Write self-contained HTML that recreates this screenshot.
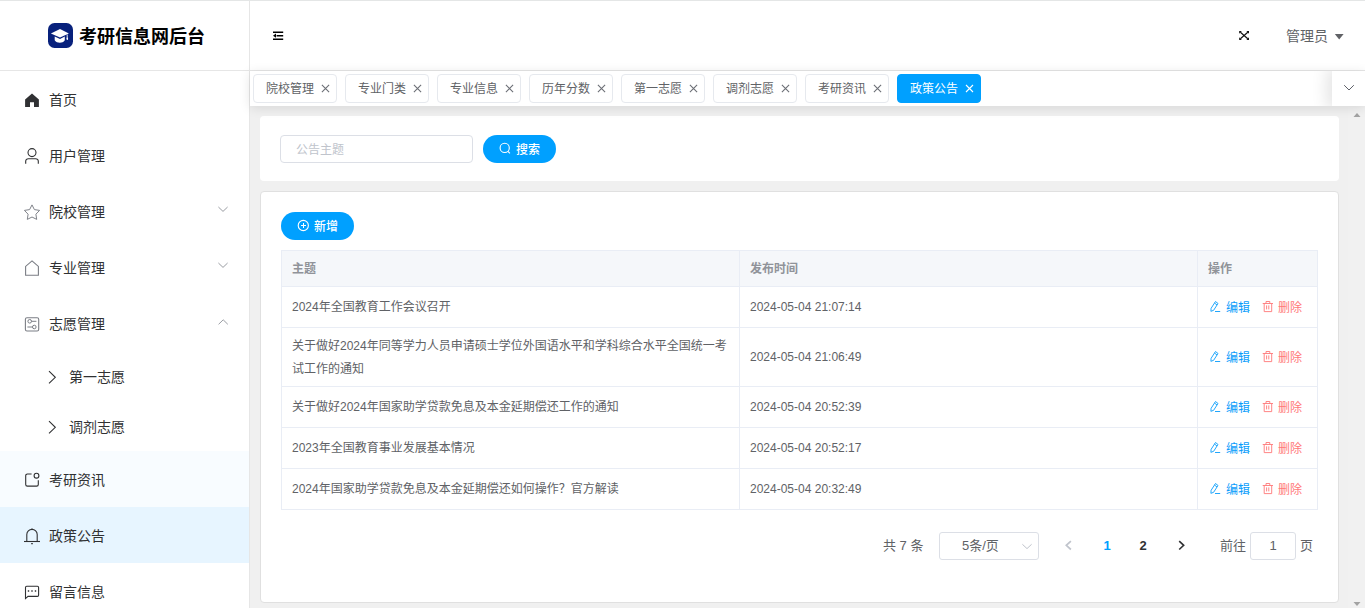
<!DOCTYPE html>
<html lang="zh-CN">
<head>
<meta charset="utf-8">
<title>考研信息网后台</title>
<style>
*{box-sizing:border-box;margin:0;padding:0}
html,body{width:1365px;height:608px;overflow:hidden;background:#fff}
body{position:relative;font-family:"Liberation Sans","Noto Sans CJK SC",sans-serif;font-size:14px;color:#303133;-webkit-font-smoothing:antialiased}
.abs{position:absolute}
svg{position:absolute;overflow:visible}
.topline{left:0;top:0;width:1365px;height:1px;background:#e4e6e6;z-index:50}

/* sidebar */
.side{left:0;top:0;width:250px;height:608px;background:#fff;border-right:1px solid #e6e6e6;overflow:hidden}
.logo{left:0;top:0;width:249px;height:71px;border-bottom:1px solid #e6e6e6}
.logo .ico{left:47.5px;top:23.3px;width:25.3px;height:25.2px;border-radius:6.5px;background:#08217c}
.logo .tt{left:79px;top:21.5px;height:30px;line-height:30px;font-size:18px;font-weight:700;color:#000;white-space:nowrap;letter-spacing:0}
.mi{left:0;width:249px;height:56px;line-height:56px;font-size:14px;color:#303133;white-space:nowrap}
.mi span{position:absolute;left:49px;top:1px}
.mi.sub{height:50px;line-height:50px}
.mi.sub span{left:69px}
.mi.hov{background:#f8fcff}
.mi.act{background:#e7f5ff}

/* header */
.hdr{left:250px;top:0;width:1115px;height:71px;background:#fff;border-bottom:1px solid #e6e6e6}
.user{left:1036px;top:21px;height:30px;line-height:30px;font-size:14px;color:#606266;white-space:nowrap}

/* tabs */
.tabs{left:250px;top:71px;width:1115px;height:35px;background:#fff;box-shadow:0 2px 12px 0 rgba(0,0,0,.11);z-index:5}
.tab{top:3px;height:29px;width:84px;border:1px solid #e6e9ee;border-radius:4px;background:#fff;font-size:12px;line-height:27px;color:#606266;white-space:nowrap}
.tab span{position:absolute;left:12px;top:1px}
.tab.on{background:#00a0ff;border-color:#00a0ff;color:#fff}
.tabmore{left:1082px;top:0;width:33px;height:35px;background:#fff;box-shadow:-3px 0 15px 3px rgba(0,0,0,.1)}
.tabclip{left:0;top:0;width:1115px;height:35px;overflow:hidden}

/* main */
.main{left:250px;top:106px;width:1098px;height:502px;background:#f0f0f0}
.sbar{left:1348px;top:106px;width:17px;height:502px;background:#f1f1f1}
.card1{left:10px;top:10px;width:1079px;height:65px;background:#fff;border-radius:4px}
.card2{left:10px;top:85px;width:1079px;height:412px;background:#fff;border:1px solid #e0e0e0;border-radius:4px}
.inp{left:20px;top:19px;width:193px;height:28px;border:1px solid #dcdfe6;border-radius:4px;font-size:12px;line-height:28px;color:#c0c4cc;padding-left:15px}
.btn{height:28px;width:73px;border-radius:14px;background:#00a0ff;color:#fff;font-size:12px;line-height:28px;white-space:nowrap}
.btn span{position:absolute;top:0.5px;font-weight:500}

/* table */
.tbl{left:20px;top:58px;width:1037px;height:260px;border:1px solid #e9edf5;font-size:12px;color:#606266}
.tr{left:0;width:1035px;border-bottom:1px solid #e9edf5}
.th{background:#f5f7fa;color:#909399;font-weight:700}
.td{top:0;height:100%;border-right:1px solid #e9edf5}
.td.c1{left:0;width:458px}
.td.c2{left:458px;width:458px}
.td.c3{left:916px;width:119px;border-right:0}
.td p{position:absolute;left:10px;right:10px;line-height:23px;white-space:nowrap}
.td p.wrap{white-space:normal}
.ed{color:#0a9dfb}
.del{color:#ff7878}
.op{position:absolute;top:0;line-height:23px;white-space:nowrap}

/* pagination */
.pg{font-size:13px;color:#606266;white-space:nowrap;line-height:28px;height:28px}
.pgsel{left:678px;top:340px;width:100px;height:28px;border:1px solid #dcdfe6;border-radius:3px}
.pgin{left:989px;top:340px;width:46px;height:28px;border:1px solid #dcdfe6;border-radius:3px;text-align:center;line-height:26px}
</style>
</head>
<body>
<div class="abs topline"></div>

<!-- SIDEBAR -->
<div class="abs side" id="side">
  <div class="abs logo">
    <div class="abs ico"></div>
    <div class="abs tt">考研信息网后台</div>
    <svg style="left:47px;top:23px" width="26" height="26" viewBox="0 0 26 26">
      <path d="M13 5.9 L21.9 10.4 L13 14.6 L3.9 10.4 Z" fill="#fff"/>
      <path d="M7.7 13.4 L13 15.9 L17.8 13.6 V17.2 C16.6 19 14.8 19.7 12.8 19.7 C10.8 19.7 9 19 7.7 17.2 Z" fill="#fff"/>
      <path d="M20.2 11.6 V15.6" stroke="#fff" stroke-width="0.9" fill="none"/>
      <ellipse cx="20.3" cy="15.8" rx="0.8" ry="1.2" fill="#fff"/>
    </svg>
  </div>

  <div class="abs mi" style="top:71px"><span>首页</span></div>
  <div class="abs mi" style="top:127px"><span>用户管理</span></div>
  <div class="abs mi" style="top:183px"><span>院校管理</span></div>
  <div class="abs mi" style="top:239px"><span>专业管理</span></div>
  <div class="abs mi" style="top:295px"><span>志愿管理</span></div>
  <div class="abs mi sub" style="top:351px"><span>第一志愿</span></div>
  <div class="abs mi sub" style="top:401px"><span>调剂志愿</span></div>
  <div class="abs mi hov" style="top:451px"><span>考研资讯</span></div>
  <div class="abs mi act" style="top:507px"><span>政策公告</span></div>
  <div class="abs mi" style="top:563px"><span>留言信息</span></div>

  <!-- menu icons (page coordinates) -->
  <svg style="left:0;top:0" width="249" height="608" viewBox="0 0 249 608" fill="none" stroke="#303133" stroke-width="1.1">
    <!-- home filled -->
    <path d="M32 93.6 L38.9 99.6 V106.9 H34 V102.2 H30 V106.9 H25.1 V99.6 Z" fill="#303133" stroke="none"/>
    <!-- user -->
    <circle cx="32" cy="152.6" r="4"/>
    <path d="M25.7 163.8 V161.3 A2.6 2.6 0 0 1 28.3 158.7 H35.7 A2.6 2.6 0 0 1 38.3 161.3 V163.8"/>
    <!-- star -->
    <path d="M32.0 204.9 L34.4 209.6 L39.6 210.4 L35.9 214.2 L36.7 219.4 L32.0 217.0 L27.3 219.4 L28.1 214.2 L24.4 210.4 L29.6 209.6 Z" stroke="#80838a" stroke-width="1" stroke-linejoin="round"/>
    <!-- house -->
    <path d="M32 260.9 L38.4 266.4 V275.2 H25.6 V266.4 Z" stroke="#7b7e85"/>
    <!-- set-up -->
    <rect x="25.4" y="317.7" width="13.3" height="13.3" rx="1.6" stroke="#7b7e85"/>
    <circle cx="29.7" cy="321.3" r="1.8" stroke="#7b7e85" stroke-width="1"/>
    <path d="M31.4 321.3 H36.4" stroke="#7b7e85" stroke-width="1"/>
    <circle cx="34.3" cy="327" r="1.8" stroke="#7b7e85" stroke-width="1"/>
    <path d="M27.4 327 H32.6" stroke="#7b7e85" stroke-width="1"/>
    <!-- sub arrows -->
    <path d="M49 371.2 L55.3 377.3 L49 383.4"/>
    <path d="M49 421.2 L55.3 427.3 L49 433.4"/>
    <!-- news -->
    <path d="M31.6 474 H27.4 A1.7 1.7 0 0 0 25.7 475.7 V484.4 A1.7 1.7 0 0 0 27.4 486.1 H36.6 A1.7 1.7 0 0 0 38.3 484.4 V480.2"/>
    <circle cx="36.5" cy="475.7" r="2.4"/>
    <!-- bell -->
    <path d="M24 541.5 H40" />
    <path d="M26.8 541.5 V534.6 A5.2 5.2 0 0 1 37.2 534.6 V541.5"/>
    <path d="M31.4 529 H32.6 M31.2 543.6 H32.8" stroke-width="1.2"/>
    <!-- chat -->
    <path d="M25.5 598.6 V587.4 A1.2 1.2 0 0 1 26.7 586.2 H37.4 A1.2 1.2 0 0 1 38.6 587.4 V595.2 A1.2 1.2 0 0 1 37.4 596.4 H28 Z"/>
    <path d="M27.8 591 H29.2 M31.3 591 H32.7 M34.8 591 H36.2" stroke-width="1.4"/>
    <!-- chevrons -->
    <path d="M218.4 207 L223 211.4 L227.6 207" stroke="#9a9da3" stroke-width="1"/>
    <path d="M218.4 263 L223 267.4 L227.6 263" stroke="#9a9da3" stroke-width="1"/>
    <path d="M218.6 324.3 L223.2 319.8 L227.8 324.3" stroke="#9a9da3" stroke-width="1"/>
  </svg>
</div>

<!-- HEADER -->
<div class="abs hdr" id="hdr">
  <div class="abs user">管理员</div>
  <svg style="left:0;top:0" width="1115" height="70" viewBox="250 0 1115 70">
    <!-- fold icon -->
    <path d="M273 31.4 H283.2 V32.9 H273 Z M273 38.4 H283.2 V39.9 H273 Z M276.6 34.9 H283.2 V36.4 H276.6 Z M273 35.65 L276 33.6 V37.7 Z" fill="#000"/>
    <!-- fullscreen icon -->
    <g stroke="#111" stroke-width="1.15" fill="none">
      <path d="M1240.4 32.2 L1247.8 38.8 M1247.8 32.2 L1240.4 38.8"/>
    </g>
    <g fill="#111">
      <path d="M1239.2 31.1 H1241.8 L1239.2 33.7 Z"/>
      <path d="M1249 31.1 H1246.4 L1249 33.7 Z"/>
      <path d="M1239.2 39.9 H1241.8 L1239.2 37.3 Z"/>
      <path d="M1249 39.9 H1246.4 L1249 37.3 Z"/>
    </g>
    <!-- caret -->
    <path d="M1334.8 34 H1343.6 L1339.2 39.4 Z" fill="#606266"/>
  </svg>
</div>

<!-- TABS -->
<div class="abs tabs" id="tabs">
  <div class="abs tabclip">
    <div class="abs tab" style="left:3px"><span>院校管理</span><svg style="left:67px;top:9px" width="9" height="9" viewBox="0 0 9 9"><path d="M0.9 0.9 L8.1 8.1 M8.1 0.9 L0.9 8.1" stroke="#6c6f76" stroke-width="1.1" fill="none"/></svg></div>
    <div class="abs tab" style="left:95px"><span>专业门类</span><svg style="left:67px;top:9px" width="9" height="9" viewBox="0 0 9 9"><path d="M0.9 0.9 L8.1 8.1 M8.1 0.9 L0.9 8.1" stroke="#6c6f76" stroke-width="1.1" fill="none"/></svg></div>
    <div class="abs tab" style="left:187px"><span>专业信息</span><svg style="left:67px;top:9px" width="9" height="9" viewBox="0 0 9 9"><path d="M0.9 0.9 L8.1 8.1 M8.1 0.9 L0.9 8.1" stroke="#6c6f76" stroke-width="1.1" fill="none"/></svg></div>
    <div class="abs tab" style="left:279px"><span>历年分数</span><svg style="left:67px;top:9px" width="9" height="9" viewBox="0 0 9 9"><path d="M0.9 0.9 L8.1 8.1 M8.1 0.9 L0.9 8.1" stroke="#6c6f76" stroke-width="1.1" fill="none"/></svg></div>
    <div class="abs tab" style="left:371px"><span>第一志愿</span><svg style="left:67px;top:9px" width="9" height="9" viewBox="0 0 9 9"><path d="M0.9 0.9 L8.1 8.1 M8.1 0.9 L0.9 8.1" stroke="#6c6f76" stroke-width="1.1" fill="none"/></svg></div>
    <div class="abs tab" style="left:463px"><span>调剂志愿</span><svg style="left:67px;top:9px" width="9" height="9" viewBox="0 0 9 9"><path d="M0.9 0.9 L8.1 8.1 M8.1 0.9 L0.9 8.1" stroke="#6c6f76" stroke-width="1.1" fill="none"/></svg></div>
    <div class="abs tab" style="left:555px"><span>考研资讯</span><svg style="left:67px;top:9px" width="9" height="9" viewBox="0 0 9 9"><path d="M0.9 0.9 L8.1 8.1 M8.1 0.9 L0.9 8.1" stroke="#6c6f76" stroke-width="1.1" fill="none"/></svg></div>
    <div class="abs tab on" style="left:647px"><span>政策公告</span><svg style="left:67px;top:9px" width="9" height="9" viewBox="0 0 9 9"><path d="M1 1 L8 8 M8 1 L1 8" stroke="#fff" stroke-width="1.1" fill="none"/></svg></div>
    <div class="abs tabmore"><svg style="left:10px;top:13px" width="13" height="8" viewBox="0 0 13 8"><path d="M2.2 1.2 L7 6 L11.8 1.2" stroke="#5d6068" stroke-width="1" fill="none"/></svg></div>
  </div>
</div>

<!-- MAIN -->
<div class="abs main" id="main">
  <div class="abs card1" id="card1">
    <div class="abs inp">公告主题</div>
    <div class="abs btn" style="left:223px;top:19px">
      <svg style="left:16px;top:7px" width="13" height="13" viewBox="0 0 13 13"><circle cx="5.7" cy="5.9" r="4.6" stroke="#fff" stroke-width="1.1" fill="none"/><path d="M9 9.3 L10.9 11.3" stroke="#fff" stroke-width="1.1"/></svg>
      <span style="left:33px">搜索</span>
    </div>
  </div>
  <div class="abs card2" id="card2">
    <div class="abs btn" style="left:20px;top:20px">
      <svg style="left:16px;top:7px" width="13" height="13" viewBox="0 0 13 13"><circle cx="6.3" cy="6.5" r="5.1" stroke="#fff" stroke-width="1.1" fill="none"/><path d="M6.5 4 V9 M4 6.5 H9" stroke="#fff" stroke-width="1"/></svg>
      <span style="left:33px">新增</span>
    </div>
    <div class="abs tbl">
      <div class="abs tr th" style="top:0;height:36px">
        <div class="abs td c1"><p style="top:7px">主题</p></div>
        <div class="abs td c2"><p style="top:7px">发布时间</p></div>
        <div class="abs td c3"><p style="top:7px">操作</p></div>
      </div>
      <div class="abs tr" style="top:36px;height:41px">
        <div class="abs td c1"><p style="top:9px">2024年全国教育工作会议召开</p></div>
        <div class="abs td c2"><p style="top:9px">2024-05-04 21:07:14</p></div>
        <div class="abs td c3"><div class="op ed" style="left:10px;top:10px;width:42px"><svg style="left:2px;top:4px" width="12" height="13" viewBox="0 0 12 13" fill="none" stroke="#0a9dfb" stroke-width="0.9"><path d="M5.5 0.5 L8 2.5 L3.6 9.3 L0.9 10.3 L1.1 7.3 Z"/><path d="M4.5 2 L7 4"/><path d="M5 10.5 H10.2"/></svg><span style="position:absolute;left:18px">编辑</span></div><div class="op del" style="left:62px;top:10px;width:42px"><svg style="left:2px;top:4px" width="12" height="13" viewBox="0 0 12 13" fill="none" stroke="#ff7878" stroke-width="0.9"><path d="M0.7 2.5 H11"/><path d="M4 2.4 V0.5 H7.8 V2.4"/><path d="M2.2 2.6 V10.6 H9.7 V2.6"/><path d="M4.6 4.4 V8.4 M6.8 4.4 V8.4"/></svg><span style="position:absolute;left:18px">删除</span></div></div>
      </div>
      <div class="abs tr" style="top:77px;height:59px">
        <div class="abs td c1"><p class="wrap" style="top:7px">关于做好2024年同等学力人员申请硕士学位外国语水平和学科综合水平全国统一考试工作的通知</p></div>
        <div class="abs td c2"><p style="top:18px">2024-05-04 21:06:49</p></div>
        <div class="abs td c3"><div class="op ed" style="left:10px;top:19px;width:42px"><svg style="left:2px;top:4px" width="12" height="13" viewBox="0 0 12 13" fill="none" stroke="#0a9dfb" stroke-width="0.9"><path d="M5.5 0.5 L8 2.5 L3.6 9.3 L0.9 10.3 L1.1 7.3 Z"/><path d="M4.5 2 L7 4"/><path d="M5 10.5 H10.2"/></svg><span style="position:absolute;left:18px">编辑</span></div><div class="op del" style="left:62px;top:19px;width:42px"><svg style="left:2px;top:4px" width="12" height="13" viewBox="0 0 12 13" fill="none" stroke="#ff7878" stroke-width="0.9"><path d="M0.7 2.5 H11"/><path d="M4 2.4 V0.5 H7.8 V2.4"/><path d="M2.2 2.6 V10.6 H9.7 V2.6"/><path d="M4.6 4.4 V8.4 M6.8 4.4 V8.4"/></svg><span style="position:absolute;left:18px">删除</span></div></div>
      </div>
      <div class="abs tr" style="top:136px;height:41px">
        <div class="abs td c1"><p style="top:9px">关于做好2024年国家助学贷款免息及本金延期偿还工作的通知</p></div>
        <div class="abs td c2"><p style="top:9px">2024-05-04 20:52:39</p></div>
        <div class="abs td c3"><div class="op ed" style="left:10px;top:10px;width:42px"><svg style="left:2px;top:4px" width="12" height="13" viewBox="0 0 12 13" fill="none" stroke="#0a9dfb" stroke-width="0.9"><path d="M5.5 0.5 L8 2.5 L3.6 9.3 L0.9 10.3 L1.1 7.3 Z"/><path d="M4.5 2 L7 4"/><path d="M5 10.5 H10.2"/></svg><span style="position:absolute;left:18px">编辑</span></div><div class="op del" style="left:62px;top:10px;width:42px"><svg style="left:2px;top:4px" width="12" height="13" viewBox="0 0 12 13" fill="none" stroke="#ff7878" stroke-width="0.9"><path d="M0.7 2.5 H11"/><path d="M4 2.4 V0.5 H7.8 V2.4"/><path d="M2.2 2.6 V10.6 H9.7 V2.6"/><path d="M4.6 4.4 V8.4 M6.8 4.4 V8.4"/></svg><span style="position:absolute;left:18px">删除</span></div></div>
      </div>
      <div class="abs tr" style="top:177px;height:41px">
        <div class="abs td c1"><p style="top:9px">2023年全国教育事业发展基本情况</p></div>
        <div class="abs td c2"><p style="top:9px">2024-05-04 20:52:17</p></div>
        <div class="abs td c3"><div class="op ed" style="left:10px;top:10px;width:42px"><svg style="left:2px;top:4px" width="12" height="13" viewBox="0 0 12 13" fill="none" stroke="#0a9dfb" stroke-width="0.9"><path d="M5.5 0.5 L8 2.5 L3.6 9.3 L0.9 10.3 L1.1 7.3 Z"/><path d="M4.5 2 L7 4"/><path d="M5 10.5 H10.2"/></svg><span style="position:absolute;left:18px">编辑</span></div><div class="op del" style="left:62px;top:10px;width:42px"><svg style="left:2px;top:4px" width="12" height="13" viewBox="0 0 12 13" fill="none" stroke="#ff7878" stroke-width="0.9"><path d="M0.7 2.5 H11"/><path d="M4 2.4 V0.5 H7.8 V2.4"/><path d="M2.2 2.6 V10.6 H9.7 V2.6"/><path d="M4.6 4.4 V8.4 M6.8 4.4 V8.4"/></svg><span style="position:absolute;left:18px">删除</span></div></div>
      </div>
      <div class="abs tr" style="top:218px;height:41px">
        <div class="abs td c1"><p style="top:9px">2024年国家助学贷款免息及本金延期偿还如何操作？官方解读</p></div>
        <div class="abs td c2"><p style="top:9px">2024-05-04 20:32:49</p></div>
        <div class="abs td c3"><div class="op ed" style="left:10px;top:10px;width:42px"><svg style="left:2px;top:4px" width="12" height="13" viewBox="0 0 12 13" fill="none" stroke="#0a9dfb" stroke-width="0.9"><path d="M5.5 0.5 L8 2.5 L3.6 9.3 L0.9 10.3 L1.1 7.3 Z"/><path d="M4.5 2 L7 4"/><path d="M5 10.5 H10.2"/></svg><span style="position:absolute;left:18px">编辑</span></div><div class="op del" style="left:62px;top:10px;width:42px"><svg style="left:2px;top:4px" width="12" height="13" viewBox="0 0 12 13" fill="none" stroke="#ff7878" stroke-width="0.9"><path d="M0.7 2.5 H11"/><path d="M4 2.4 V0.5 H7.8 V2.4"/><path d="M2.2 2.6 V10.6 H9.7 V2.6"/><path d="M4.6 4.4 V8.4 M6.8 4.4 V8.4"/></svg><span style="position:absolute;left:18px">删除</span></div></div>
      </div>
    </div>
    <div class="abs pg" style="left:622px;top:340px">共 7 条</div>
    <div class="abs pg pgsel"><span style="position:absolute;left:22px;top:-1px">5条/页</span><svg style="left:82px;top:11px" width="10" height="6" viewBox="0 0 10 6"><path d="M0.4 0.3 L5 4.6 L9.6 0.3" stroke="#c0c4cc" stroke-width="1" fill="none"/></svg></div>
    <svg style="left:804px;top:348px" width="7" height="11" viewBox="0 0 7 11"><path d="M5.9 1.1 L1.3 5.3 L5.9 9.5" stroke="#c0c4cc" stroke-width="1.7" fill="none"/></svg>
    <div class="abs pg" style="left:836px;top:340px;width:20px;text-align:center;font-weight:700;color:#00a0ff">1</div>
    <div class="abs pg" style="left:872px;top:340px;width:20px;text-align:center;font-weight:700;color:#303133">2</div>
    <svg style="left:917px;top:348px" width="7" height="11" viewBox="0 0 7 11"><path d="M1.2 1.1 L5.7 5.3 L1.2 9.5" stroke="#303133" stroke-width="1.6" fill="none"/></svg>
    <div class="abs pg" style="left:959px;top:340px">前往</div>
    <div class="abs pg pgin">1</div>
    <div class="abs pg" style="left:1039px;top:340px">页</div>
  </div>
</div>
<div class="abs sbar" id="sbar">
  <svg style="left:0;top:0" width="17" height="502" viewBox="0 0 17 502"><path d="M5.5 11 L9 7 L12.5 11 Z" fill="#a3a3a3"/><path d="M5.5 496 L9 500 L12.5 496 Z" fill="#a3a3a3"/></svg>
</div>
</body>
</html>
